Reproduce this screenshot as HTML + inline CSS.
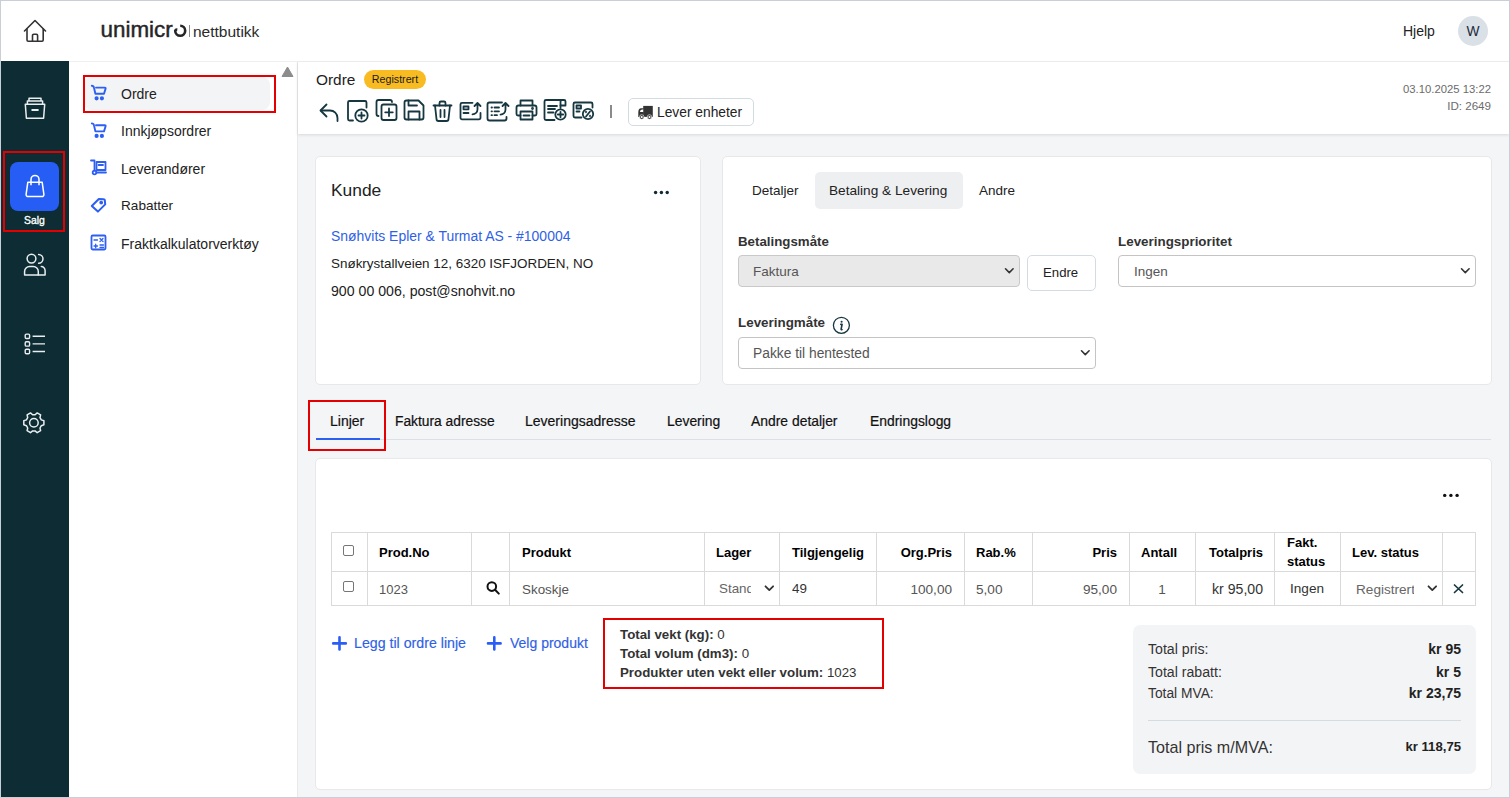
<!DOCTYPE html>
<html><head><meta charset="utf-8">
<style>
*{box-sizing:border-box;margin:0;padding:0}
html,body{width:1510px;height:798px;overflow:hidden}
body{position:relative;background:#f4f5f7;font-family:"Liberation Sans",sans-serif;color:#222}
.a{position:absolute}
.t{position:absolute;white-space:nowrap;line-height:20px}
svg{position:absolute;overflow:visible}
#frame{position:absolute;left:0;top:0;width:1510px;height:798px;border:1px solid #c9cfd7;z-index:50;pointer-events:none}
.red{position:absolute;border:2px solid #e40000;z-index:20}
</style></head><body>
<div id="frame"></div>

<!-- header -->
<div class="a" style="left:0;top:0;width:1510px;height:61px;background:#fff"></div>
<div class="a" style="left:69px;top:61px;width:1441px;height:1px;background:#eef0f2"></div>

<!-- home icon -->
<svg style="left:0;top:0" width="70" height="61" fill="none" stroke="#333" stroke-width="1.6" stroke-linejoin="round" stroke-linecap="round">
  <path d="M24.5 31 L35 20.5 L45.5 31"/>
  <path d="M27 29 V40 a1.2 1.2 0 0 0 1.2 1.2 H42 a1.2 1.2 0 0 0 1.2 -1.2 V29"/>
  <path d="M32.5 41 V35.5 a1.2 1.2 0 0 1 1.2 -1.2 H36.4 a1.2 1.2 0 0 1 1.2 1.2 V41"/>
</svg>

<!-- logo -->
<div class="t" style="left:100.5px;top:16.6px;font-size:22.4px;line-height:26px;color:#262626;letter-spacing:0px;-webkit-text-stroke:0.45px #262626">unimicr</div>
<svg style="left:0;top:0" width="300" height="61" fill="none" stroke="#262626" stroke-width="2.6" stroke-linecap="butt">
  <path d="M180.2 25.8 A5 5 0 1 1 175.2 30.8 Q175.6 29.4 177.3 29.6"/>
</svg>
<div class="a" style="left:189px;top:25px;width:1px;height:12px;background:#8a8a8a"></div>
<div class="t" style="left:193px;top:22.2px;font-size:15.5px;line-height:20px;color:#2a2a2a">nettbutikk</div>
<div class="t" style="left:1403px;top:21.4px;font-size:14px;line-height:20px;color:#222">Hjelp</div>
<div class="a" style="left:1458px;top:16px;width:30px;height:30px;border-radius:50%;background:#d9e0e6"></div>
<div class="t" style="left:1458px;top:21.8px;width:30px;text-align:center;font-size:13.8px;line-height:20px;color:#1d2a3a">W</div>

<!-- dark sidebar -->
<div class="a" style="left:0;top:61px;width:69px;height:737px;background:#0d2c33"></div>
<!-- archive icon -->
<svg style="left:0;top:0" width="69" height="460" fill="none" stroke="#e9eef0" stroke-width="1.5" stroke-linejoin="round">
  <path d="M29 101 V98.2 H41 V101"/>
  <path d="M27.4 104 V101.1 H42.6 V104"/>
  <path d="M25.3 104.3 H44.7 L43.6 118.3 H26.4 Z"/>
  <path d="M31.5 110 H38.6" stroke-width="2"/>
</svg>
<div class="a" style="left:10px;top:162px;width:49px;height:49px;border-radius:8px;background:#265ef5"></div>
<svg style="left:0;top:0" width="69" height="460" fill="none" stroke="#fff" stroke-width="1.5" stroke-linejoin="round">
  <path d="M27.8 182.3 H42.2 L43.9 194.4 A2 2 0 0 1 41.9 196.6 H28.1 A2 2 0 0 1 26.1 194.4 Z"/>
  <path d="M31 185.3 V179.4 a4 4 0 0 1 8 0 V185.3"/>
</svg>
<div class="t" style="left:0;top:212px;width:69px;text-align:center;font-size:10.4px;line-height:18px;color:#fff;-webkit-text-stroke:0.35px #fff">Salg</div>
<div class="red" style="left:3px;top:151px;width:62px;height:81px"></div>
<!-- people icon -->
<svg style="left:0;top:0" width="69" height="460" fill="none" stroke="#e9eef0" stroke-width="1.5" stroke-linejoin="round" stroke-linecap="round">
  <circle cx="31.5" cy="258.6" r="4.4"/>
  <path d="M24.6 275 V271.6 a5 5 0 0 1 5 -5 H33.3 a5 5 0 0 1 5 5 V275 Z"/>
  <path d="M38.6 254.4 a4.4 4.4 0 0 1 0 8.8"/>
  <path d="M41.3 266.6 a3.8 3.8 0 0 1 3.8 3.8 V275 H38.3"/>
</svg>
<!-- list icon -->
<svg style="left:0;top:0" width="69" height="460" fill="none" stroke="#e9eef0" stroke-width="1.4">
  <rect x="25.2" y="334.1" width="4.4" height="4.4" rx="1.2"/>
  <rect x="25.2" y="341.7" width="4.4" height="4.4" rx="1.2"/>
  <rect x="25.2" y="349.3" width="4.4" height="4.4" rx="1.2"/>
  <path d="M32.6 336.3 H45 M32.6 343.9 H45 M32.6 351.5 H45"/>
</svg>
<!-- gear icon -->
<svg style="left:0;top:0" width="69" height="460" fill="none" stroke="#e9eef0" stroke-width="1.5" stroke-linejoin="round">
  <circle cx="33.9" cy="422.8" r="4.3"/>
  <path transform="translate(-0.4 -0.4) rotate(90 34.3 423.2)" d="M32.3 413.2 h4 l0.9 2.6 l2.3 1.3 l2.7 -0.6 l2 3.4 l-1.8 2.1 v2.5 l1.8 2.1 l-2 3.4 l-2.7 -0.6 l-2.3 1.3 l-0.9 2.6 h-4 l-0.9 -2.6 l-2.3 -1.3 l-2.7 0.6 l-2 -3.4 l1.8 -2.1 v-2.5 l-1.8 -2.1 l2 -3.4 l2.7 0.6 l2.3 -1.3 Z"/>
</svg>

<!-- sub nav -->
<div class="a" style="left:69px;top:62px;width:228px;height:736px;background:#fff"></div>
<div class="a" style="left:297px;top:62px;width:1px;height:736px;background:#e9e9e9"></div>
<svg style="left:0;top:0" width="300" height="80"><path d="M282 76.5 L287.5 67 L293 76.5 Z" fill="#8c8c8c" stroke="#8c8c8c" stroke-width="1" stroke-linejoin="round"/></svg>
<div class="a" style="left:84px;top:77px;width:186px;height:33px;border-radius:8px;background:#f3f4f6"></div>
<div class="red" style="left:83px;top:75px;width:193px;height:38px"></div>
<svg style="left:0;top:0" width="300" height="260" fill="none" stroke="#2d5ff2" stroke-width="1.8" stroke-linejoin="round" stroke-linecap="round">
  <path d="M91.8 85.8 Q93.6 85.8 94 87.8 L95.4 93.8 H104 L105.6 88.6 Q105.8 87.6 104.8 87.6 H96" stroke-width="1.9"/>
  <circle cx="96.6" cy="98.3" r="1.2" fill="#2d5ff2"/><circle cx="101.9" cy="98.3" r="1.2" fill="#2d5ff2"/>
  <path d="M91.8 123.4 Q93.6 123.4 94 125.4 L95.4 131.4 H104 L105.6 126.2 Q105.8 125.2 104.8 125.2 H96" stroke-width="1.9"/>
  <circle cx="96.6" cy="135.9" r="1.2" fill="#2d5ff2"/><circle cx="101.9" cy="135.9" r="1.2" fill="#2d5ff2"/>
  <path d="M91 160.5 H94.5 V170.5 M96.5 172.5 H106"/>
  <circle cx="94.5" cy="172.5" r="1.8"/>
  <rect x="96.5" y="162" width="9" height="8"/>
  <path d="M98.5 165 H103"/>
  <path d="M91.8 206 L98.8 199 L103.8 199.3 A1 1 0 0 1 104.8 200.2 L105.2 204.4 L97.9 211.6 Z" stroke-width="2"/>
  <circle cx="101.2" cy="202.6" r="1" fill="#2d5ff2"/>
  <rect x="91.5" y="235.5" width="14" height="14" rx="1.2"/>
  <path d="M94 240 H97.5 M100 238.5 L103 241.5 M103 238.5 L100 241.5 M94 246 H97.5 M95.7 244.2 V247.8 M100 245 H103.5 M100 247.5 H103.5" stroke-width="1.3"/>
</svg>
<div class="t" style="left:121px;top:84px;font-size:14px;color:#222">Ordre</div>
<div class="t" style="left:121px;top:121px;font-size:14px;color:#222">Innkjøpsordrer</div>
<div class="t" style="left:121px;top:159px;font-size:14px;color:#222">Leverandører</div>
<div class="t" style="left:121px;top:196px;font-size:13.6px;color:#222">Rabatter</div>
<div class="t" style="left:121px;top:234px;font-size:14px;color:#222">Fraktkalkulatorverktøy</div>

<!-- page header -->
<div class="a" style="left:298px;top:62px;width:1211px;height:72px;background:#fff;box-shadow:0 1px 3px rgba(0,0,0,0.12)"></div>
<div class="t" style="left:316px;top:69.5px;font-size:15.4px;color:#222">Ordre</div>
<div class="a" style="left:364px;top:70px;width:62px;height:19px;border-radius:10px;background:#f8bc22"></div>
<div class="t" style="left:364px;top:69px;width:62px;text-align:center;font-size:10.7px;color:#1a1a1a">Registrert</div>
<div class="t" style="left:1300px;top:81px;width:1191px;text-align:right;font-size:11.3px;line-height:16px;color:#6b6b6b;left:300px">03.10.2025 13:22</div>
<div class="t" style="left:300px;top:98px;width:1191px;text-align:right;font-size:11.6px;line-height:16px;color:#6b6b6b">ID: 2649</div>

<!-- toolbar icons -->
<svg style="left:0;top:0" width="620" height="140" fill="none" stroke="#163740" stroke-width="1.8" stroke-linejoin="round" stroke-linecap="round">
  <!-- reply -->
  <path d="M326.5 104.5 L320.5 110.5 L326.5 116.5"/>
  <path d="M321 110.5 H330 A7.5 7.5 0 0 1 337.5 118 V121"/>
  <!-- new doc -->
  <path d="M353 120.5 H349.5 A1.5 1.5 0 0 1 348 119 V102.5 A1.5 1.5 0 0 1 349.5 101 H365 A1.5 1.5 0 0 1 366.5 102.5 V107.5"/>
  <circle cx="361.5" cy="115.5" r="6.2"/>
  <path d="M361.5 112.5 V118.5 M358.5 115.5 H364.5"/>
  <!-- copy -->
  <path d="M378.5 116 A2 2 0 0 1 376.5 114 V102 A2 2 0 0 1 378.5 100 H390 A2 2 0 0 1 392 102"/>
  <rect x="381.5" y="104.5" width="15" height="15.5" rx="2"/>
  <path d="M389 108.5 V116 M385.2 112.3 H392.8"/>
  <!-- save -->
  <path d="M406.5 100.5 H418.5 L423.5 105.5 V117.5 A2 2 0 0 1 421.5 119.5 H406.5 A2 2 0 0 1 404.5 117.5 V102.5 A2 2 0 0 1 406.5 100.5 Z"/>
  <path d="M408.5 100.5 V105.5 H417"/>
  <path d="M408.5 119.5 V111.5 H419.5 V119.5"/>
  <!-- trash -->
  <path d="M433.5 105.5 H451.5"/>
  <path d="M439.5 105.5 V103 A1.5 1.5 0 0 1 441 101.5 H444 A1.5 1.5 0 0 1 445.5 103 V105.5"/>
  <path d="M435 105.5 L436.5 119 A2 2 0 0 0 438.5 121 H446.5 A2 2 0 0 0 448.5 119 L450 105.5"/>
  <path d="M440.5 110 V117 M444.5 110 V117"/>
  <!-- export 1 -->
  <path d="M472.5 102.8 H462 A1.5 1.5 0 0 0 460.5 104.3 V117.8 A1.5 1.5 0 0 0 462 119.3 H479 A1.5 1.5 0 0 0 480.5 117.8 V113"/>
  <rect x="463.5" y="106.5" width="5" height="2.8"/>
  <path d="M463.5 113 H468.5"/>
  <path d="M472.5 114.3 A5 5 0 0 0 477.5 109.3 V104 M474.5 106 L477.5 103 L480.5 106"/>
  <!-- export 2 -->
  <path d="M502 102.5 H489.5 A2 2 0 0 0 487.5 104.5 V118.5 A2 2 0 0 0 489.5 120.5 H504.5 A2 2 0 0 0 506.5 118.5 V117"/>
  <path d="M491.5 107.5 H492 M491.5 111.3 H492 M491.5 115.2 H492 M494.5 107.5 H499 M494.5 111.3 H499 M494.5 115.2 H497"/>
  <path d="M500.5 114.6 A5 5 0 0 0 505.5 109.6 V104 M502.5 106 L505.5 103 L508.5 106"/>
  <!-- print -->
  <path d="M520.5 105.5 V100.5 H532.5 V105.5"/>
  <path d="M520.5 115.5 H518 A1.5 1.5 0 0 1 516.5 114 V107.5 A2 2 0 0 1 518.5 105.5 H534.5 A2 2 0 0 1 536.5 107.5 V114 A1.5 1.5 0 0 1 535 115.5 H532.5"/>
  <rect x="520.5" y="111.5" width="12" height="8"/>
  <path d="M523.5 115.5 H529.5"/>
  <circle cx="532.5" cy="108.5" r="0.5" fill="#163740"/>
  <!-- doc plus -->
  <path d="M554.5 120 H546 A1.5 1.5 0 0 1 544.5 118.5 V101.5 A1.5 1.5 0 0 1 546 100 H564 A1.5 1.5 0 0 1 565.5 101.5 V105.5 H560.5 V101.5 A1.5 1.5 0 0 1 562 100"/>
  <path d="M560.5 105.5 V108"/>
  <path d="M548 106 H557 M548 109 H555 M548 112.5 H553.5"/>
  <circle cx="560.5" cy="114.5" r="5.2"/>
  <path d="M560.5 111.8 V117.2 M557.8 114.5 H563.2"/>
  <!-- doc percent -->
  <path d="M581.5 117.5 H575 A1.5 1.5 0 0 1 573.5 116 V104 A1.5 1.5 0 0 1 575 102.5 H591 A1.5 1.5 0 0 1 592.5 104 V107.5"/>
  <rect x="576.5" y="105.5" width="4.5" height="3"/>
  <path d="M576.5 111.5 H579.5"/>
  <circle cx="588" cy="114" r="5.2"/>
  <path d="M586 116.5 L590 111.5"/>
  <circle cx="586" cy="112" r="0.3" fill="#163740"/><circle cx="590" cy="116" r="0.3" fill="#163740"/>
</svg>
<div class="a" style="left:610px;top:105px;width:2px;height:13px;background:#8a8a8a"></div>
<div class="a" style="left:628px;top:98px;width:126px;height:28px;border:1px solid #d3dce3;border-radius:5px;background:#fff"></div>
<svg style="left:0;top:0" width="700" height="140" fill="#333">
  <path d="M643.2 105.9 H652.8 V116.9 H643.2 Z"/>
  <path d="M643.6 108.2 H641.2 Q638.3 108.5 638.3 112 V116.9 H643.6 Z"/>
  <path d="M639.9 112.1 Q640.1 109.6 642 109.6 H643.2 V112.1 Z" fill="#fff"/>
  <circle cx="641.7" cy="117" r="2.3" stroke="#fff" stroke-width="0.6"/>
  <circle cx="649.5" cy="117" r="2.3" stroke="#fff" stroke-width="0.6"/>
  <circle cx="641.7" cy="117" r="1.1" fill="#fff"/>
  <circle cx="649.5" cy="117" r="1.1" fill="#fff"/>
</svg>
<div class="t" style="left:657px;top:102.6px;font-size:13.8px;color:#222">Lever enheter</div>

<!-- Kunde card -->
<div class="a" style="left:315px;top:156px;width:386px;height:229px;background:#fff;border:1px solid #e8e8e8;border-radius:5px"></div>
<div class="t" style="left:331px;top:180px;font-size:17.4px;line-height:20px;color:#222">Kunde</div>
<svg style="left:0;top:0" width="700" height="200" fill="#102a33"><circle cx="655.6" cy="192.5" r="1.7"/><circle cx="661.4" cy="192.5" r="1.7"/><circle cx="667.2" cy="192.5" r="1.7"/></svg>
<div class="t" style="left:331px;top:226px;font-size:13.95px;color:#2f5fe6">Snøhvits Epler &amp; Turmat AS - #100004</div>
<div class="t" style="left:331px;top:254px;font-size:13.45px;color:#222">Snøkrystallveien 12, 6320 ISFJORDEN, NO</div>
<div class="t" style="left:331px;top:281px;font-size:14.15px;color:#222">900 00 006, post@snohvit.no</div>

<!-- details card -->
<div class="a" style="left:722px;top:156px;width:770px;height:229px;background:#fff;border:1px solid #e8e8e8;border-radius:5px"></div>
<div class="a" style="left:815px;top:172px;width:148px;height:37px;border-radius:5px;background:#eeeff1"></div>
<div class="t" style="left:752px;top:180.5px;font-size:13.5px;color:#222">Detaljer</div>
<div class="t" style="left:829px;top:180.5px;font-size:13.65px;color:#222">Betaling &amp; Levering</div>
<div class="t" style="left:979px;top:180.5px;font-size:13.5px;color:#222">Andre</div>

<div class="t" style="left:738px;top:232px;font-size:13.3px;font-weight:bold;color:#333">Betalingsmåte</div>
<div class="a" style="left:738px;top:255px;width:282px;height:32px;border:1px solid #c9c9c9;border-radius:4px;background:#e9e9e9"></div>
<div class="t" style="left:753px;top:261.5px;font-size:13.5px;color:#555">Faktura</div>
<div class="a" style="left:1027px;top:255px;width:69px;height:36px;border:1px solid #d3dce3;border-radius:5px;background:#fff"></div>
<div class="t" style="left:1043px;top:263.3px;font-size:13.2px;color:#222">Endre</div>

<div class="t" style="left:1118px;top:232px;font-size:13.4px;font-weight:bold;color:#333">Leveringsprioritet</div>
<div class="a" style="left:1118px;top:255px;width:358px;height:32px;border:1px solid #c4c4c4;border-radius:4px;background:#fff"></div>
<div class="t" style="left:1134px;top:262px;font-size:13.5px;color:#555">Ingen</div>

<div class="t" style="left:738px;top:313px;font-size:13.4px;font-weight:bold;color:#333">Leveringmåte</div>
<svg style="left:0;top:0" width="1500" height="400" fill="none" stroke="#163740" stroke-width="1.3">
  <circle cx="841.4" cy="325.3" r="8"/>
  <circle cx="841.6" cy="321.7" r="1.05" fill="#163740" stroke="none"/>
  <path d="M840.8 324.4 H842.1 L841.1 329.2 Q841 330 842 329.5" stroke-width="1.6" stroke-linejoin="round" stroke-linecap="round"/>
</svg>
<div class="a" style="left:738px;top:337px;width:358px;height:32px;border:1px solid #c4c4c4;border-radius:4px;background:#fff"></div>
<div class="t" style="left:753px;top:343.5px;font-size:13.8px;color:#555">Pakke til hentested</div>
<svg style="left:0;top:0" width="1500" height="400" fill="none" stroke="#333" stroke-width="1.6" stroke-linecap="round" stroke-linejoin="round">
  <path d="M1005.5 268.8 L1009.3 272.6 L1013.1 268.8"/>
  <path d="M1461.5 268.8 L1465.3 272.6 L1469.1 268.8"/>
  <path d="M1081.5 350.8 L1085.3 354.6 L1089.1 350.8"/>
</svg>

<!-- tabs -->
<div class="a" style="left:316px;top:439px;width:1175px;height:1px;background:#dcdfe3"></div>
<div class="a" style="left:316px;top:438px;width:64px;height:2px;background:#2d5ff2"></div>
<div class="t" style="left:330px;top:410.5px;font-size:14px;color:#111;-webkit-text-stroke:0.2px #111">Linjer</div>
<div class="t" style="left:395px;top:411.6px;font-size:13.8px;color:#111;-webkit-text-stroke:0.2px #111">Faktura adresse</div>
<div class="t" style="left:525px;top:410.5px;font-size:14px;color:#111;-webkit-text-stroke:0.2px #111">Leveringsadresse</div>
<div class="t" style="left:667px;top:411px;font-size:13.9px;color:#111;-webkit-text-stroke:0.2px #111">Levering</div>
<div class="t" style="left:751px;top:411px;font-size:13.9px;color:#111;-webkit-text-stroke:0.2px #111">Andre detaljer</div>
<div class="t" style="left:870px;top:411px;font-size:13.9px;color:#111;-webkit-text-stroke:0.2px #111">Endringslogg</div>
<div class="red" style="left:308px;top:400px;width:78px;height:51px"></div>

<!-- lines card -->
<div class="a" style="left:315px;top:458px;width:1177px;height:332px;background:#fff;border:1px solid #e8e8e8;border-radius:5px"></div>
<svg style="left:0;top:0" width="1500" height="520" fill="#111"><circle cx="1444.7" cy="495.4" r="1.7"/><circle cx="1450.9" cy="495.4" r="1.7"/><circle cx="1457.1" cy="495.4" r="1.7"/></svg>

<!-- table -->
<div id="tbl"></div>
<div class="a" style="left:331px;top:532px;width:1px;height:74px;background:#dadada"></div>
<div class="a" style="left:367px;top:532px;width:1px;height:74px;background:#dadada"></div>
<div class="a" style="left:471px;top:532px;width:1px;height:74px;background:#dadada"></div>
<div class="a" style="left:509px;top:532px;width:1px;height:74px;background:#dadada"></div>
<div class="a" style="left:704px;top:532px;width:1px;height:74px;background:#dadada"></div>
<div class="a" style="left:779px;top:532px;width:1px;height:74px;background:#dadada"></div>
<div class="a" style="left:876px;top:532px;width:1px;height:74px;background:#dadada"></div>
<div class="a" style="left:964px;top:532px;width:1px;height:74px;background:#dadada"></div>
<div class="a" style="left:1032px;top:532px;width:1px;height:74px;background:#dadada"></div>
<div class="a" style="left:1129px;top:532px;width:1px;height:74px;background:#dadada"></div>
<div class="a" style="left:1195px;top:532px;width:1px;height:74px;background:#dadada"></div>
<div class="a" style="left:1274px;top:532px;width:1px;height:74px;background:#dadada"></div>
<div class="a" style="left:1340px;top:532px;width:1px;height:74px;background:#dadada"></div>
<div class="a" style="left:1442px;top:532px;width:1px;height:74px;background:#dadada"></div>
<div class="a" style="left:1475px;top:532px;width:1px;height:74px;background:#dadada"></div>
<div class="a" style="left:331px;top:532px;width:1145px;height:1px;background:#dadada"></div>
<div class="a" style="left:331px;top:571px;width:1145px;height:1px;background:#dadada"></div>
<div class="a" style="left:331px;top:605px;width:1145px;height:1px;background:#dadada"></div>


<!-- table header text -->
<div class="a" style="left:343px;top:545px;width:11px;height:11px;border:1px solid #767676;border-radius:2px;background:#fff"></div>
<div class="a" style="left:343px;top:581px;width:11px;height:11px;border:1px solid #767676;border-radius:2px;background:#fff"></div>
<div class="t" style="left:379px;top:542.8px;font-size:13px;font-weight:bold;color:#000">Prod.No</div>
<div class="t" style="left:522px;top:542.8px;font-size:13px;font-weight:bold;color:#000">Produkt</div>
<div class="t" style="left:716px;top:542.8px;font-size:13px;font-weight:bold;color:#000">Lager</div>
<div class="t" style="left:792px;top:542.8px;font-size:13px;font-weight:bold;color:#000">Tilgjengelig</div>
<div class="t" style="left:800px;top:542.8px;width:152px;text-align:right;font-size:13px;font-weight:bold;color:#000">Org.Pris</div>
<div class="t" style="left:976px;top:542.8px;font-size:13px;font-weight:bold;color:#000">Rab.%</div>
<div class="t" style="left:1000px;top:542.8px;width:117px;text-align:right;font-size:13px;font-weight:bold;color:#000">Pris</div>
<div class="t" style="left:1141px;top:542.8px;font-size:13px;font-weight:bold;color:#000">Antall</div>
<div class="t" style="left:1100px;top:542.8px;width:163px;text-align:right;font-size:13px;font-weight:bold;color:#000">Totalpris</div>
<div class="t" style="left:1287px;top:533px;font-size:13px;line-height:19px;font-weight:bold;color:#000">Fakt.<br>status</div>
<div class="t" style="left:1352px;top:542.8px;font-size:13px;font-weight:bold;color:#000">Lev. status</div>
<!-- row -->
<div class="t" style="left:379px;top:580px;font-size:13px;color:#555">1023</div>
<svg style="left:0;top:0" width="1500" height="620" fill="none" stroke="#111" stroke-width="2" stroke-linecap="round">
  <circle cx="491.8" cy="586.6" r="4.3"/>
  <path d="M495 589.8 L498.8 593.6"/>
</svg>
<div class="t" style="left:522px;top:580px;font-size:13.4px;color:#555">Skoskje</div>
<div class="a" style="left:719px;top:575px;width:32px;height:26px;overflow:hidden"><div class="t" style="left:0;top:4px;font-size:13.4px;color:#666">Standard</div></div>
<div class="t" style="left:792px;top:579px;font-size:13.4px;color:#333">49</div>
<div class="t" style="left:800px;top:580px;width:152px;text-align:right;font-size:13.6px;color:#555">100,00</div>
<div class="t" style="left:976px;top:580px;font-size:13.6px;color:#555">5,00</div>
<div class="t" style="left:1000px;top:580px;width:117px;text-align:right;font-size:13.6px;color:#555">95,00</div>
<div class="t" style="left:1129px;top:580px;width:66px;text-align:center;font-size:13.6px;color:#555">1</div>
<div class="t" style="left:1100px;top:579px;width:163px;text-align:right;font-size:14.1px;color:#333">kr 95,00</div>
<div class="t" style="left:1274px;top:579px;width:66px;text-align:center;font-size:13.6px;color:#333">Ingen</div>
<div class="a" style="left:1356px;top:576px;width:57.5px;height:26px;overflow:hidden"><div class="t" style="left:0;top:4px;font-size:13.6px;color:#666">Registrert</div></div>
<svg style="left:0;top:0" width="1500" height="620" fill="none" stroke="#333" stroke-width="1.8" stroke-linecap="round" stroke-linejoin="round">
  <path d="M765.5 586.3 L769.3 590.1 L773.1 586.3"/>
  <path d="M1428.5 586.3 L1432.3 590.1 L1436.1 586.3"/>
  <path d="M1454.5 585 L1462.5 592.5 M1462.5 585 L1454.5 592.5" stroke-width="1.7" stroke="#163740"/>
</svg>

<!-- add buttons -->
<svg style="left:0;top:0" width="1500" height="700" fill="none" stroke="#2a5ef4" stroke-width="2.6" stroke-linecap="round">
  <path d="M339.5 637.3 V649.5 M333.2 643.4 H345.8"/>
  <path d="M494.3 637.3 V649.5 M488 643.4 H500.6"/>
</svg>
<div class="t" style="left:354px;top:633px;font-size:14.2px;color:#2f5fe6;-webkit-text-stroke:0.15px #2f5fe6">Legg til ordre linje</div>
<div class="t" style="left:510px;top:633px;font-size:14px;color:#2f5fe6;-webkit-text-stroke:0.15px #2f5fe6">Velg produkt</div>

<div class="red" style="left:603px;top:618px;width:281px;height:71px"></div>
<div class="t" style="left:620px;top:625px;font-size:13.3px;color:#333"><b>Total vekt (kg):</b> 0</div>
<div class="t" style="left:620px;top:644px;font-size:13.3px;color:#333"><b>Total volum (dm3):</b> 0</div>
<div class="t" style="left:620px;top:663px;font-size:13.3px;color:#333"><b>Produkter uten vekt eller volum:</b> 1023</div>

<!-- totals -->
<div class="a" style="left:1133px;top:625px;width:343px;height:149px;border-radius:7px;background:#f3f4f6"></div>
<div class="t" style="left:1148px;top:639px;font-size:14.15px;color:#333">Total pris:</div>
<div class="t" style="left:1148px;top:662px;font-size:14.15px;color:#333">Total rabatt:</div>
<div class="t" style="left:1148px;top:684px;font-size:13.8px;color:#333">Total MVA:</div>
<div class="t" style="left:1200px;top:639px;width:1261px;left:200px;text-align:right;font-size:14px;font-weight:bold;color:#222">kr 95</div>
<div class="t" style="left:200px;top:662px;width:1261px;text-align:right;font-size:14px;font-weight:bold;color:#222">kr 5</div>
<div class="t" style="left:200px;top:683px;width:1261px;text-align:right;font-size:14px;font-weight:bold;color:#222">kr 23,75</div>
<div class="a" style="left:1148px;top:720px;width:313px;height:1px;background:#d6dbe1"></div>
<div class="t" style="left:1148px;top:737px;font-size:16.1px;color:#333">Total pris m/MVA:</div>
<div class="t" style="left:200px;top:737px;width:1261px;text-align:right;font-size:13.15px;font-weight:bold;color:#222">kr 118,75</div>

</body></html>
